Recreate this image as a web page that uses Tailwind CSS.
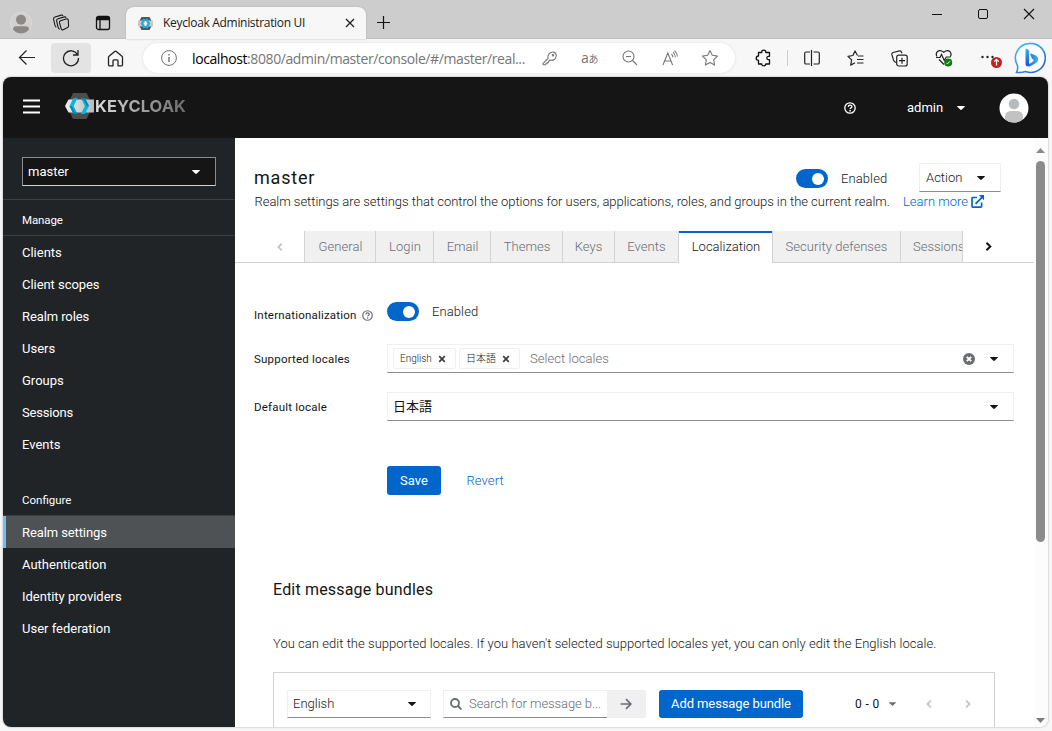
<!DOCTYPE html>
<html lang="en">
  <head>
    <meta charset="UTF-8" />
    <title>Keycloak Administration UI</title>
    <meta name="viewport" content="width=device-width, initial-scale=1.0" />
    <script src="https://cdn.jsdelivr.net/npm/@tailwindcss/browser@4"></script>
  </head>
  <body class="w-[1052px] h-[731px] overflow-hidden bg-[#f7f7f7] font-['Roboto','Noto_Sans_CJK_JP',sans-serif] text-[13px] text-[#151515]">
    <svg class="hidden">
      <symbol id="caret" viewBox="0 0 8 4"><path d="M.4 0h7.2q.6.2.1.8L4.5 3.8q-.5.4-1 0L.3.8Q-.2.2.4 0z" fill="currentColor" /></symbol>
      <symbol id="help" viewBox="0 0 12 12">
        <circle cx="6" cy="6" r="5.2" fill="none" stroke="currentColor" stroke-width="1.3" />
        <path d="M4.2 4.9C4.3 3.7 5 3.2 6 3.2s1.9.6 1.9 1.5c0 1.2-1.7 1.2-1.7 2.3" fill="none" stroke="currentColor" stroke-width="1.3" />
        <circle cx="6.1" cy="8.7" r=".85" fill="currentColor" />
      </symbol>
      <symbol id="times" viewBox="0 0 8 8"><path d="M1.2 1.2l5.6 5.6M6.8 1.2L1.2 6.8" stroke="currentColor" stroke-width="1.700" /></symbol>
      <symbol id="angle" viewBox="0 0 6 8"><path d="M1.2.7L4.6 4 1.2 7.3" fill="none" stroke="currentColor" stroke-width="1.8" /></symbol>
    </svg>

    <!-- title bar -->
    <div class="flex h-[39px] bg-[#cdcdcd] shadow-[inset_0_-1px_0_#c0c0c0]">
      <div class="flex items-center pt-[7px] pl-[10px] w-[126px]">
        <svg class="size-[22px]" viewBox="0 0 22 22">
          <circle cx="11" cy="11" r="10.5" fill="#d3d1cf" stroke="#dedcda" />
          <circle cx="11" cy="7.800" r="5" fill="#8b8886" />
          <path d="M3 17.5q0-3.2 3.5-3.2h9q3.500 0 3.500 3.200-3 4-8 4t-8-4z" fill="#8b8886" />
        </svg>
        <svg class="ml-[20px] size-[18px]" viewBox="0 0 18 18" fill="none" stroke="#1a1a1a" stroke-width="1.1" stroke-linejoin="round">
          <path d="M8.500 6.700L14 5q2-.4 2.300 1.200l.3 5.600q0 1.200-1 1.700l-4.400 2.200q-1.600.6-2-.9L7.400 8.400Q7.200 7.100 8.500 6.700z" />
          <path d="M14 3.800q-.3-1.200-1.600-.9L6 4.800q-1.600.5-1.400 2l1.500 6.500q.4 1.600 1.700 1.900" />
          <path d="M11 2q-.5-1.300-1.800-.9L3 3.100Q1.300 3.700 1.600 5.300L3 11.500q.3 1.300 1.300 1.600" />
        </svg>
        <svg class="ml-[25px] size-[16px]" viewBox="0 0 16 16" fill="none" stroke="#111" stroke-width="1.300">
          <rect x="1.500" y="1.500" width="13" height="13" rx="2" />
          <path d="M1.500 3.500h13" stroke-width="3.500" />
          <path d="M5 4v10.500" />
        </svg>
      </div>
      <div class="flex items-center mt-[7px] h-8 w-[240px] rounded-t-lg bg-[#f7f7f7] pl-3 shadow-[0_0_2px_#aaa]">
        <svg class="size-[15px]" viewBox="0 0 15 15">
          <path d="M3.500 1h8L15 7.500 11.500 14h-8L0 7.500z" fill="#555" />
          <path d="M0 4.500h15v6H0z" fill="#c9c9c9" />
          <path d="M6.500 3L4 7.500 6.500 12M8.500 3L11 7.500 8.500 12" fill="none" stroke="#16b4e0" stroke-width="2.300" />
          <path d="M7.500 5L9 7.500 7.500 10 6 7.500z" fill="#f4f4f4" />
        </svg>
        <span class="ml-[10px] w-[180px] font-['Open_Sans',sans-serif] text-[12px] tracking-[-0.32px] text-[#1a1a1a] whitespace-nowrap">Keycloak Administration UI</span>
        <svg class="ml-[2px] size-[10px]" viewBox="0 0 10 10" stroke="#222" stroke-width="1.300"><path d="M1 1l8 8M9 1L1 9" /></svg>
      </div>
      <svg class="ml-[11px] mt-[16px] size-[14px]" viewBox="0 0 14 14" stroke="#111" stroke-width="1.200"><path d="M6.500 0v13M0 6.500h13" /></svg>
      <div class="flex ml-auto gap-[34px] pr-[17px] pt-[8px]">
        <svg class="h-3 w-[11px]" viewBox="0 0 11 12" stroke="#111"><path d="M0 6.500h10" /></svg>
        <svg class="h-3 w-3" viewBox="0 0 12 12" fill="none" stroke="#111"><rect x="1.500" y="1.500" width="9" height="9" rx="1.500" /></svg>
        <svg class="h-3 w-3" viewBox="0 0 12 12" stroke="#111" stroke-width="1.100"><path d="M1 1l10 10M11 1L1 11" /></svg>
      </div>
    </div>

    <!-- toolbar -->
    <div class="flex h-[38px] items-center pl-[18px]">
      <svg class="size-[18px]" viewBox="0 0 18 18" fill="none" stroke="#222" stroke-width="1.200"><path d="M17 8.500H1.500M8.500 1.500l-7 7 7 7" /></svg>
      <div class="flex items-center justify-center ml-[15px] h-[30px] w-[40px] rounded bg-[#e3e3e3]">
        <svg class="size-[18px]" viewBox="0 0 18 18" fill="none" stroke="#222" stroke-width="1.300"><path d="M15.500 5.500A7.500 7.500 0 1 0 16.500 9M16 1v5h-5" /></svg>
      </div>
      <svg class="ml-[16px] size-[17px]" viewBox="0 0 17 17" fill="none" stroke="#222" stroke-width="1.300" stroke-linejoin="round"><path d="M1.500 7.300q0-.6.500-1L7.700 1.400q.8-.6 1.600 0L15 6.300q.5.400.5 1v7.500q0 1-1 1H11v-5q0-1-1-1H7q-1 0-1 1v5H2.500q-1 0-1-1z" /></svg>
      <div class="flex items-center ml-[19px] h-[30px] w-[592px] rounded-full bg-white shadow-[0_0_3px_#ddd] pl-[18px] text-[#767676] font-['Open_Sans','Noto_Sans_CJK_JP',sans-serif]">
        <svg class="size-4" viewBox="0 0 16 16" fill="none" stroke="#707070"><circle cx="8" cy="8" r="7.400" /><path d="M8 7v5M8 4v1.500" stroke-width="1.400" /></svg>
        <span class="ml-[15px] w-[350px] text-[14px] tracking-[-0.4px] whitespace-nowrap"><span class="text-black">localhost</span>:8080/admin/master/console/#/master/real...</span>
        <svg class="size-[15px]" viewBox="0 0 15 15" fill="none" stroke="#777" stroke-width="1.100" stroke-linejoin="round"><path d="M6 7.500Q5.500 5 7 2.900 9 .7 11.500 1.100t2.800 3.400q-.1 2.500-2 4T8 9L6.500 10.500v1H5.200v1.300H3.800L3.300 13.700H1.500Q.8 13.500.9 12.600z" /><circle cx="11" cy="4.300" r=".7" /></svg>
        <span class="ml-[24px] w-[20px] text-[14px] leading-none whitespace-nowrap tracking-[-0.2px]">a<span class="text-[10px]">あ</span></span>
        <svg class="ml-[21px] size-[16px]" viewBox="0 0 16 16" fill="none" stroke="#777" stroke-width="1.100"><circle cx="6.500" cy="6.500" r="5.500" /><path d="M4 6.500h5M10.500 10.500L15 15" /></svg>
        <svg class="ml-[24px] size-[17px]" viewBox="0 0 17 17" fill="none" stroke="#777" stroke-width="1.100"><path d="M1 15L5.800 3 10.600 15M2.600 11h6.400M9.500 4.200q1.300 1.300 1.300 3M11 2.200q2.300 2.300 2.300 5M12.500.6q3 2.800 3 6" /></svg>
        <svg class="ml-[22px] size-[18px]" viewBox="0 0 18 18" fill="none" stroke="#777" stroke-width="1.100" stroke-linejoin="round"><path d="M9 1.500l2.300 4.800 5.200.8-3.800 3.700.9 5.200L9 13.500 4.400 16l.9-5.200L1.500 7.100l5.200-.8z" /></svg>
      </div>
      <svg class="ml-[20px] size-[18px]" viewBox="0 0 18 18" fill="none" stroke="#111" stroke-width="1.300" stroke-linejoin="round"><path d="M3.500 3.500h3.300Q6.500 1.200 8.700 1.200T10.800 3.500h3.700v3.800h-1.200q-1.500.3-1.500 1.700t1.500 1.700h1.200v4.300h-3.700q0 1.800-2.100 1.800T6.800 15H3.500v-3.700Q1.200 11.300 1.200 9.200T3.500 7z" /></svg>
      <div class="ml-[14px] h-4 w-px bg-[#cfcfcf]"></div>
      <svg class="ml-[16px] size-4" viewBox="0 0 16 16" fill="none" stroke="#222" stroke-width="1.200"><path d="M6 2H2Q.7 2 .7 3.300v9.400Q.7 14 2 14h4M7.500 0v16M9.500 2H14q1.300 0 1.300 1.300v9.400Q15.300 14 14 14H9.500" /></svg>
      <svg class="ml-[27px] size-[17px]" viewBox="0 0 17 17" fill="none" stroke="#222" stroke-width="1.200" stroke-linejoin="round"><path d="M10.500 5.500L8 1 5.900 5.500 1 6.300l3.600 3.600-.9 5.200L8 12.800M11 6h5.500M10 9.500h6.500M10 13h6.500" /></svg>
      <svg class="ml-[27px] size-[17px]" viewBox="0 0 17 17" fill="none" stroke="#222" stroke-width="1.200"><rect x="5.700" y="5.200" width="10.500" height="10.800" rx="2" /><path d="M11 7.700v6M8 10.700h6M5 12.500Q3.200 12 2.500 10L.9 4.700Q.6 3 2 2.500L8.500.8q1.700-.2 2 1.200l.4 1.200" /></svg>
      <svg class="ml-[27px] size-[18px]" viewBox="0 0 18 18" fill="none" stroke="#222" stroke-width="1.200"><path d="M2 7.500Q.4 5 2.200 2.800 5 .3 8.700 3.300q3.600-3 6.400-.5 1.800 2.200.3 4.700M1 8.500h4l1.500-3 2.800 6 2-3.500h4.200M4 10.500l5 5" /><circle cx="13.200" cy="13.500" r="4" fill="#107c10" stroke="none" /><path d="M11.500 14.200l1 .6 2.500-2.500" stroke="#fff" stroke-width="1" /></svg>
      <svg class="ml-[27px] size-[22px]" viewBox="0 0 22 22"><g fill="#222"><circle cx="2.500" cy="10" r="1.200" /><circle cx="7.500" cy="10" r="1.200" /><circle cx="12.500" cy="10" r="1.200" /></g><circle cx="16.500" cy="15.500" r="5.500" fill="#c42121" /><path d="M16.500 18.500v-6M14.200 14.600l2.300-2.300 2.300 2.300" fill="none" stroke="#fff" stroke-width="1.300" /></svg>
      <svg class="ml-[12px] size-[32px]" viewBox="0 0 32 32">
        <defs>
          <linearGradient id="bing" x1="0" y1="0" x2="1" y2="1"><stop offset="0" stop-color="#35c3f5" /><stop offset="1" stop-color="#2457d6" /></linearGradient>
          <linearGradient id="stem" x1="0" y1="0" x2="0" y2="1"><stop offset="0" stop-color="#2fb8f5" /><stop offset="1" stop-color="#1b4fd8" /></linearGradient>
          <linearGradient id="bowl"><stop offset="0" stop-color="#1f5ee0" /><stop offset="1" stop-color="#36b4f4" /></linearGradient>
        </defs>
        <path d="M16.500 1.500a14.500 14.500 0 1 1-5 28q-4 1.500-9 .9 1.700-3.400 1-7A14.500 14.500 0 0 1 16.500 1.500z" fill="#fff" stroke="url(#bing)" stroke-width="1.600" />
        <path d="M16.300 12.300q-.2-1 .9-.8l5 2.200q2.300 1.300 2 4-.4 2.300-2.600 3.500l-5.300 3q-2 .9-3.500-.4l6.500-4.500.2-1.500-1.700-1.200z" fill="url(#bowl)" />
        <path d="M11.500 7.500q0-1 1-.7l1.800.9q.9.500.9 1.500v12.600q0 1.700-1.300 2.300-2.400.3-2.400-2.200z" fill="url(#stem)" />
      </svg>
    </div>

    <!-- page -->
    <div class="ml-[3px] flex h-[650px] w-[1045px] flex-col overflow-hidden rounded-[8px] bg-white shadow-[0_0_2px_#999]">
      <header class="flex h-[61px] shrink-0 items-center bg-[#151515] text-white">
        <svg class="ml-[20px] mt-[-1px] h-4 w-[17px]" viewBox="0 0 17 16" stroke="#fff" stroke-width="2.200"><path d="M0 1.500h17M0 7.500h17M0 13.500h17" /></svg>
        <svg class="ml-[25px] mt-[-3px] h-[26px] w-[30px]" viewBox="0 0 30 26">
          <defs><linearGradient id="band"><stop offset="0" stop-color="#eee" /><stop offset="1" stop-color="#b9b9b9" /></linearGradient></defs>
          <path d="M8 0h13.500l6.500 13-6.500 13H8L2 13z" fill="#4d4d4d" />
          <path d="M3.500 6.500H29v13H3.500L0 13z" fill="url(#band)" />
          <path d="M8.500 5h4L8.700 13l3.800 8h-4L4.500 13z" fill="#00b8e3" />
          <path d="M16 5h4l4 8-4 8h-4l3.800-8z" fill="#00b8e3" />
          <path d="M12.500 21h-4l-4-8h2.200l3.200 6.300h1.800z" fill="#008aaa" />
          <path d="M16 5h4l4 8h-2.200l-3.200-6.300h-1.800z" fill="#008aaa" />
        </svg>
        <span class="mt-[-3px] bg-linear-to-r from-[#dedede] to-[#6b6b6b] bg-clip-text font-['Inter',sans-serif] text-[16.500px] font-bold tracking-[0.05px] text-transparent">KEYCLOAK</span>
        <div class="ml-auto flex items-center pr-[19px]">
          <svg class="size-3"><use href="#help" /></svg>
          <span class="ml-[51px] w-[36px]">admin</span>
          <svg class="ml-[14px] h-1 w-2"><use href="#caret" /></svg>
          <svg class="ml-[34px] size-[30px]" viewBox="0 0 30 30">
            <clipPath id="av"><circle cx="15" cy="15" r="14.500" /></clipPath>
            <g clip-path="url(#av)"><path d="M0 0h30v30H0z" fill="#fff" /><circle cx="15" cy="11" r="5.300" fill="#b8bbbe" /><path d="M6 30v-6q0-6 6-6h6q6 0 6 6v6z" fill="#c2c2c2" /></g>
          </svg>
        </div>
      </header>

      <div class="flex flex-1">
        <!-- sidebar -->
        <nav class="w-[232px] shrink-0 bg-[#212427] text-white">
          <div class="h-[62px] border-b border-[#3c3f42] px-[19px] pt-[19px]">
            <div class="flex h-[29px] w-[194px] items-center justify-between border border-[#8a8d90] border-b-[#d2d2d2] bg-[#151515] pl-[5px] pr-[15px]"><span>master</span><svg class="h-1 w-2"><use href="#caret" /></svg></div>
          </div>
          <div class="flex h-9 items-center border-b border-[#3c3f42] pl-[19px] pt-[6px] text-[11.500px] tracking-[-0.1px]">Manage</div>
          <ul class="leading-[34px]">
            <li class="h-8 pl-[19px]">Clients</li>
            <li class="h-8 pl-[19px] tracking-[-0.05px]">Client scopes</li>
            <li class="h-8 pl-[19px] tracking-[-0.1px]">Realm roles</li>
            <li class="h-8 pl-[19px]">Users</li>
            <li class="h-8 pl-[19px]">Groups</li>
            <li class="h-8 pl-[19px] tracking-[-0.2px]">Sessions</li>
            <li class="h-8 pl-[19px]">Events</li>
          </ul>
          <div class="mt-[20px] flex h-9 items-center border-b border-[#3c3f42] pl-[19px] pt-[6px] text-[11.500px]">Configure</div>
          <ul class="leading-[34px]">
            <li class="h-8 border-l-3 border-[#73bcf7] bg-[#4f5255] pl-4 tracking-[-0.1px]">Realm settings</li>
            <li class="h-8 pl-[19px]">Authentication</li>
            <li class="h-8 pl-[19px]">Identity providers</li>
            <li class="h-8 pl-[19px]">User federation</li>
          </ul>
        </nav>

        <!-- content -->
        <main class="w-[799px] shrink-0 font-light">
          <div class="flex h-[54px] items-end pl-[19px]">
            <h1 class="w-[542px] pb-[2px] text-[18px] font-normal leading-6 tracking-[0.800px]">master</h1>
            <div class="mb-[4px] flex h-[19px] w-8 items-center justify-end rounded-full bg-[#06c] pr-[4px]"><div class="size-[12px] rounded-full bg-white"></div></div>
            <span class="ml-[13px] mb-[4px] w-[78px] leading-[19px] tracking-[0.1px]">Enabled</span>
            <div class="flex h-[29px] w-[82px] items-center justify-between border border-[#f0f0f0] border-b-[#8a8d90] pl-[6px] pr-[15px]"><span>Action</span><svg class="h-1 w-2"><use href="#caret" /></svg></div>
          </div>
          <div class="flex h-[39px] pl-[19.500px] leading-[19px]">
            <p class="w-[648.500px] whitespace-nowrap tracking-[-0.032px]">Realm settings are settings that control the options for users, applications, roles, and groups in the current realm.</p>
            <a class="w-[65px] whitespace-nowrap text-[#06c]">Learn more</a>
            <svg class="ml-[3px] mt-[3px] size-[13px] text-[#06c]" viewBox="0 0 13 13" fill="none" stroke="currentColor" stroke-width="1.700"><path d="M6 2.500H1.800q-.8 0-.8.800v8q0 .8.800.8h8q.8 0 .8-.8V7.500M4.500 8.800l6.700-6.700" /><path d="M7.800 0H13v5.200z" fill="currentColor" stroke="none" /></svg>
          </div>

          <div class="flex h-8 border-b border-[#d2d2d2] text-[#6a6e73]">
            <div class="flex w-[69px] items-center justify-center pl-[20px] text-[#c4c4c4]"><svg class="h-2 w-[6px] rotate-180"><use href="#angle" /></svg></div>
            <div class="flex h-8 w-[659px] overflow-hidden border-r border-[#d2d2d2] text-center leading-[31px]">
              <div class="w-[71px] shrink-0 border-l border-b border-[#d2d2d2] bg-[#f0f0f0] pl-px tracking-[0.1px]">General</div>
              <div class="w-[58px] shrink-0 border-l border-b border-[#d2d2d2] bg-[#f0f0f0] pl-px tracking-[0.1px]">Login</div>
              <div class="w-[57px] shrink-0 border-l border-b border-[#d2d2d2] bg-[#f0f0f0] pl-px">Email</div>
              <div class="w-[72px] shrink-0 border-l border-b border-[#d2d2d2] bg-[#f0f0f0] pl-px">Themes</div>
              <div class="w-[52px] shrink-0 border-l border-b border-[#d2d2d2] bg-[#f0f0f0]">Keys</div>
              <div class="w-[64px] shrink-0 border-l border-b border-[#d2d2d2] bg-[#f0f0f0] tracking-[0.1px]">Events</div>
              <div class="w-[95px] shrink-0 border-x border-[#d2d2d2] bg-white pl-px text-[#151515] shadow-[inset_0_2px_0_#06c]">Localization</div>
              <div class="w-[127px] shrink-0 border-b border-[#d2d2d2] bg-[#f0f0f0] tracking-[0.05px]">Security defenses</div>
              <div class="w-[75px] shrink-0 border-l border-b border-[#d2d2d2] bg-[#f0f0f0] pl-[12px] text-left">Sessions</div>
            </div>
            <div class="flex w-[51px] items-center justify-center text-[#151515]"><svg class="h-[9px] w-[7px]"><use href="#angle" /></svg></div>
          </div>

          <form class="pl-[19px] pt-[39px]">
            <div class="flex h-[42px]">
              <div class="flex h-[27px] w-[133px] items-center text-[11.500px] font-normal tracking-[0.2px]"><span class="w-[108px]">Internationalization</span><svg class="size-[11px] text-[#6a6e73]"><use href="#help" width="11" height="11" /></svg></div>
              <div class="flex h-[19px] w-8 items-center justify-end rounded-full bg-[#06c] pr-[4px]"><div class="size-[12px] rounded-full bg-white"></div></div>
              <span class="ml-[13px] leading-[19px] tracking-[0.1px]">Enabled</span>
            </div>
            <div class="flex h-12">
              <label class="w-[133px] text-[11.500px] font-normal leading-[30px] tracking-[0.2px]">Supported locales</label>
              <div class="flex h-[29px] w-[627px] items-center border border-[#f0f0f0] border-b-[#8a8d90] pl-[5px]">
                <div class="flex h-[21px] w-[63px] items-center rounded-[2px] border border-[#f0f0f0] pl-[6px] text-[10px]"><span class="w-[38px]">English</span><svg class="size-2 text-[#3c3f42]"><use href="#times" /></svg></div>
                <div class="ml-[3px] flex h-[21px] w-[61px] items-center rounded-[2px] border border-[#f0f0f0] pl-[6px] text-[10px]"><span class="w-[36px]">日本語</span><svg class="size-2 text-[#3c3f42]"><use href="#times" /></svg></div>
                <span class="ml-[10px] flex-1 tracking-[0.05px] text-[#6a6e73]">Select locales</span>
                <svg class="size-3" viewBox="0 0 12 12"><circle cx="6" cy="6" r="6" fill="#6a6e73" /><path d="M3.800 3.800l4.400 4.400M8.200 3.800L3.800 8.200" stroke="#fff" stroke-width="1.900" /></svg>
                <svg class="ml-[15px] mr-[15px] h-1 w-2"><use href="#caret" /></svg>
              </div>
            </div>
            <div class="flex h-[74px]">
              <label class="w-[133px] text-[11.500px] font-normal leading-[30px] tracking-[0.2px]">Default locale</label>
              <div class="flex h-[29px] w-[627px] items-center justify-between border border-[#f0f0f0] border-b-[#8a8d90] pl-[5px] pr-[15px]"><span class="font-normal">日本語</span><svg class="h-1 w-2"><use href="#caret" /></svg></div>
            </div>
            <div class="flex h-[29px] pl-[133px] leading-[29px]">
              <button type="button" class="w-[54px] rounded-[3px] bg-[#06c] font-normal text-white">Save</button>
              <a class="ml-[25.500px] tracking-[0.1px] text-[#06c]">Revert</a>
            </div>
          </form>

          <section class="pl-[38px] pt-[83px]">
            <h2 class="text-[16px] font-normal leading-6 tracking-[0.18px]">Edit message bundles</h2>
            <p class="mt-[32px] h-[38px] whitespace-nowrap leading-5 tracking-[0.036px]">You can edit the supported locales. If you haven't selected supported locales yet, you can only edit the English locale.</p>
            <div class="flex h-[60px] w-[722px] border border-b-0 border-[#d2d2d2] pl-[13px] pt-[17px]">
              <div class="flex h-[28px] w-[144px] items-center justify-between border border-[#f0f0f0] border-b-[#8a8d90] pl-[5px] pr-[14px]"><span>English</span><svg class="h-1 w-2"><use href="#caret" /></svg></div>
              <div class="ml-[12px] flex h-[28px] w-[164px] items-center border border-r-0 border-[#f0f0f0] border-b-[#8a8d90] pl-[6px] text-[#6a6e73]">
                <svg class="size-3" viewBox="0 0 12 12" fill="none" stroke="currentColor" stroke-width="1.800"><circle cx="5" cy="5" r="4" /><path d="M8 8l3.500 3.500" /></svg>
                <span class="ml-[7px] whitespace-nowrap tracking-[-0.08px]">Search for message b...</span>
              </div>
              <div class="flex h-[28px] w-[39px] items-center justify-center bg-[#f0f0f0] pr-px"><svg class="size-3" viewBox="0 0 12 12" fill="none" stroke="#6a6e73" stroke-width="1.700"><path d="M.5 6h10M6 1.200L10.800 6 6 10.800" /></svg></div>
              <button type="button" class="ml-[13px] h-[28px] w-[144px] rounded-[3px] bg-[#06c] font-normal tracking-[-0.1px] text-white">Add message bundle</button>
              <div class="flex h-[28px] items-center">
                <span class="ml-[52px] w-[34px] text-[12px] font-normal tracking-[0.4px]">0 - 0</span>
                <svg class="h-1 w-[7px] text-[#6a6e73]"><use href="#caret" /></svg>
                <svg class="ml-[30px] h-2 w-[6px] rotate-180 text-[#c4c4c4]"><use href="#angle" /></svg>
                <svg class="ml-[33px] h-2 w-[6px] text-[#c4c4c4]"><use href="#angle" /></svg>
              </div>
            </div>
          </section>
        </main>

        <!-- scrollbar -->
        <div class="flex w-[14px] flex-col items-center bg-[#fcfcfc] pt-[10px] pr-px pb-[9px]">
          <svg class="h-[5px] w-[9px]" viewBox="0 0 9 5"><path d="M4.500 0L9 5H0z" fill="#8b8b8b" /></svg>
          <div class="mt-[8px] h-[381px] w-[9px] rounded-full bg-[#8b8b8b]"></div>
          <svg class="mt-auto h-[5px] w-[9px]" viewBox="0 0 9 5"><path d="M0 0h9L4.500 5z" fill="#7b7b7b" /></svg>
        </div>
      </div>
    </div>
  </body>
</html>
